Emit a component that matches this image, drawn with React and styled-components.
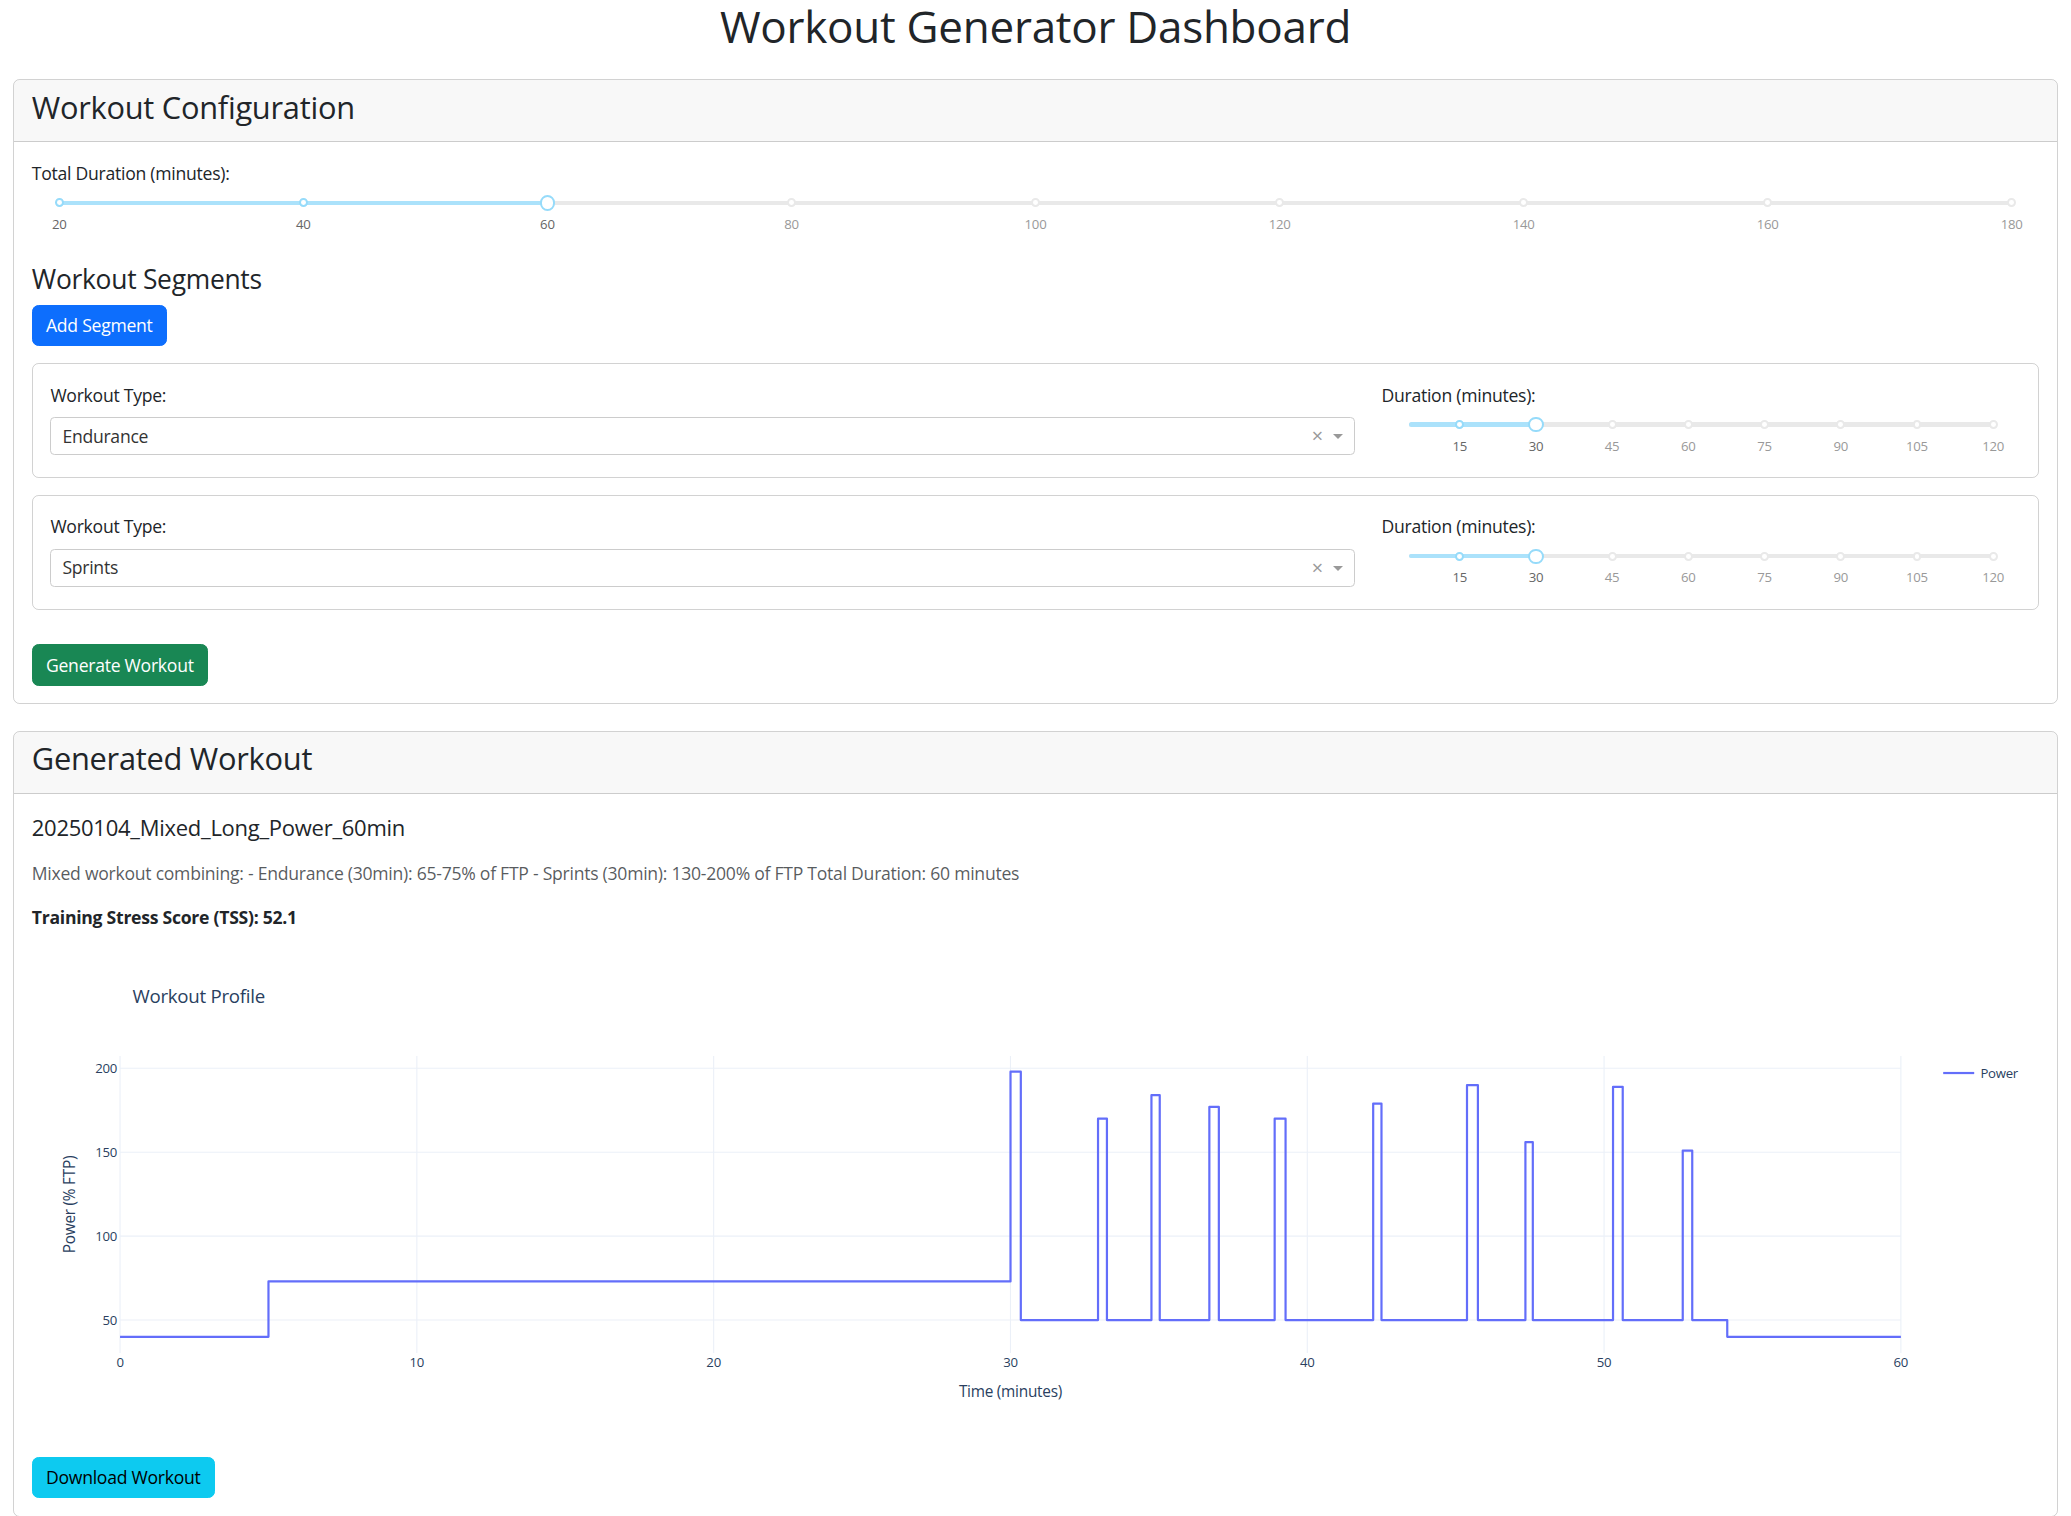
import React from "react";
import styled, { createGlobalStyle } from "styled-components";

const GlobalStyle = createGlobalStyle`
  * { box-sizing: border-box; }
  body {
    margin: 0;
    font-family: "Open Sans", "Noto Sans", "DejaVu Sans", sans-serif;
    font-size: 17.6px;
    line-height: 1.5;
    letter-spacing: -0.015em;
    color: #212529;
    background: #fff;
  }
`;

const Page = styled.div`
  padding: 0 13.2px;
`;

const PageTitle = styled.h1`
  margin: 0 0 26.4px;
  font-size: 44px;
  font-weight: 500;
  line-height: 1.2;
  text-align: center;
`;

const Card = styled.section`
  border: 1px solid rgba(0, 0, 0, 0.175);
  border-radius: 6.6px;
  margin-bottom: 26.4px;
  overflow: hidden;
`;

const CardHeader = styled.div`
  padding: 8.8px 17.6px;
  background: rgba(33, 37, 41, 0.03);
  border-bottom: 1px solid rgba(0, 0, 0, 0.175);
`;

const CardTitle = styled.h3`
  margin: 0 0 6.6px;
  font-size: 30.8px;
  font-weight: 500;
  line-height: 1.2;
`;

const CardBody = styled.div`
  padding: 17.6px;
`;

const FieldLabel = styled.label`
  display: block;
  margin-bottom: 8.8px;
`;

const SectionTitle = styled.h4`
  margin: 26.4px 0 8.8px;
  font-size: 26.4px;
  font-weight: 500;
  line-height: 1.2;
`;

const variants = {
  primary: { bg: "#0d6efd", fg: "#fff" },
  success: { bg: "#198754", fg: "#fff" },
  info: { bg: "#0dcaf0", fg: "#000" },
};

const Button = styled.button`
  display: inline-block;
  margin-top: ${(p) => p.$mt || 0}px;
  padding: 6.6px 13.2px;
  font-family: inherit;
  font-size: 17.6px;
  line-height: 1.5;
  letter-spacing: inherit;
  border: 1px solid ${(p) => variants[p.$variant].bg};
  border-radius: 6.6px;
  background: ${(p) => variants[p.$variant].bg};
  color: ${(p) => variants[p.$variant].fg};
  cursor: pointer;
`;

/* slider (rc-slider look) */
const SliderWrap = styled.div`
  padding: 0 27.5px 27.5px;
`;

const SliderBox = styled.div`
  position: relative;
  height: 15.4px;
  padding: 5.5px 0;
`;

const Rail = styled.div`
  position: absolute;
  left: 0;
  right: 0;
  top: 5.5px;
  height: 4.4px;
  background: #e9e9e9;
  border-radius: 6.6px;
`;

const Track = styled.div`
  position: absolute;
  left: 0;
  top: 5.5px;
  height: 4.4px;
  background: #abe2fb;
  border-radius: 6.6px;
`;

const Dot = styled.span`
  position: absolute;
  top: 3.3px;
  width: 8.8px;
  height: 8.8px;
  margin-left: -4.4px;
  border: 2.2px solid ${(p) => (p.$active ? "#96dbfa" : "#e9e9e9")};
  border-radius: 50%;
  background: #fff;
`;

const Handle = styled.span`
  position: absolute;
  top: 0;
  width: 15.4px;
  height: 15.4px;
  margin-left: -7.7px;
  border: 2.2px solid #96dbfa;
  border-radius: 50%;
  background: #fff;
`;

const MarkText = styled.span`
  position: absolute;
  top: 19.8px;
  transform: translateX(-50%);
  font-size: 13.2px;
  line-height: 1.5;
  color: ${(p) => (p.$active ? "#666" : "#999")};
`;

function Slider({ min, max, value, marks }) {
  const pct = (v) => ((v - min) / (max - min)) * 100;
  return (
    <SliderWrap>
      <SliderBox>
        <Rail />
        <Track style={{ width: `${pct(value)}%` }} />
        {marks.map((m) => (
          <Dot key={m} $active={m <= value} style={{ left: `${pct(m)}%` }} />
        ))}
        <Handle style={{ left: `${pct(value)}%` }} />
        {marks.map((m) => (
          <MarkText key={m} $active={m <= value} style={{ left: `${pct(m)}%` }}>
            {m}
          </MarkText>
        ))}
      </SliderBox>
    </SliderWrap>
  );
}

/* dropdown (dash react-select look) */
const Select = styled.div`
  display: flex;
  align-items: center;
  height: 38px;
  border: 1px solid #ccc;
  border-radius: 4.4px;
  background: #fff;
`;

const SelectValue = styled.div`
  flex: 1;
  padding-left: 11px;
  color: #333;
`;

const ClearZone = styled.span`
  width: 18.7px;
  text-align: center;
  font-size: 19.8px;
  line-height: 1;
  color: #999;
`;

const ArrowZone = styled.span`
  display: flex;
  justify-content: center;
  width: 27.5px;
  padding-right: 5.5px;
`;

const Arrow = styled.span`
  width: 0;
  height: 0;
  margin-top: 3px;
  border-style: solid;
  border-width: 5.5px 5.5px 2.75px;
  border-color: #999 transparent transparent;
`;

const SegmentList = styled.div`
  margin-top: 16.5px;
`;

const SegmentCard = styled.div`
  border: 1px solid rgba(0, 0, 0, 0.175);
  border-radius: 6.6px;
  margin-bottom: 16.5px;
`;

const Row = styled.div`
  display: flex;
  margin: 0 -13.2px;
`;

const Col = styled.div`
  flex: 0 0 ${(p) => (p.$span / 12) * 100}%;
  padding: 0 13.2px;
  min-width: 0;
`;

const WorkoutName = styled.h5`
  margin: 3px 0 19.7px;
  font-size: 22px;
  font-weight: 500;
  line-height: 1.2;
`;

const Description = styled.p`
  margin: 0 0 17.6px;
  color: rgba(33, 37, 41, 0.75);
`;

const Tss = styled.p`
  margin: 0 0 15.6px;
  font-weight: 700;
`;

const GraphSvg = styled.svg`
  display: block;
  width: 100%;
  height: auto;
  font-family: "Open Sans", "Noto Sans", sans-serif;
`;

const segments = [
  { type: "Endurance" },
  { type: "Sprints" },
];

const profile = [
  [0, 5, 40],
  [5, 30, 73],
  [30, 30.35, 198],
  [30.35, 32.95, 50],
  [32.95, 33.25, 170],
  [33.25, 34.75, 50],
  [34.75, 35.03, 184],
  [35.03, 36.7, 50],
  [36.7, 37.02, 177],
  [37.02, 38.9, 50],
  [38.9, 39.27, 170],
  [39.27, 42.22, 50],
  [42.22, 42.5, 179],
  [42.5, 45.38, 50],
  [45.38, 45.75, 190],
  [45.75, 47.35, 50],
  [47.35, 47.6, 156],
  [47.6, 50.3, 50],
  [50.3, 50.63, 189],
  [50.63, 52.65, 50],
  [52.65, 52.97, 151],
  [52.97, 54.15, 50],
  [54.15, 60, 40],
];

const W = 2007;
const H = 495;
const PL = 88;
const PR = 1868.5;
const PT = 110;
const PB = 407;
const sx = (t) => PL + (t * (PR - PL)) / 60;
const sy = (v) => 374 - (v - 50) * 1.678;

function WorkoutChart() {
  const pts = [];
  profile.forEach(([a, b, v]) => {
    pts.push([sx(a), sy(v)]);
    pts.push([sx(b), sy(v)]);
  });
  const d = pts.map((p, i) => `${i ? "L" : "M"}${p[0].toFixed(1)},${p[1].toFixed(1)}`).join(" ");
  const xt = [0, 10, 20, 30, 40, 50, 60];
  const yt = [50, 100, 150, 200];
  return (
    <GraphSvg viewBox={`0 0 ${W} ${H}`}>
      <text x="100.4" y="57" fontSize="18.7" fill="#2a3f5f">Workout Profile</text>
      {xt.map((t) => (
        <line key={t} x1={sx(t)} x2={sx(t)} y1={PT} y2={PB} stroke="#ebf0f8" strokeWidth="1.1" />
      ))}
      {yt.map((v) => (
        <line key={v} x1={PL} x2={PR} y1={sy(v)} y2={sy(v)} stroke="#ebf0f8" strokeWidth="1.1" />
      ))}
      <path d={d} fill="none" stroke="#636efa" strokeWidth="2.2" strokeLinejoin="round" />
      {xt.map((t) => (
        <text key={t} x={sx(t)} y="420.5" fontSize="13.2" fill="#2a3f5f" textAnchor="middle">{t}</text>
      ))}
      {yt.map((v) => (
        <text key={v} x="85" y={sy(v) + 4.6} fontSize="13.2" fill="#2a3f5f" textAnchor="end">{v}</text>
      ))}
      <text x={(PL + PR) / 2} y="450.5" fontSize="15.4" fill="#2a3f5f" textAnchor="middle">Time (minutes)</text>
      <text
        x="0"
        y="0"
        fontSize="15.4"
        fill="#2a3f5f"
        textAnchor="middle"
        transform={`translate(42.5, ${(PT + PB) / 2}) rotate(-90)`}
      >
        Power (% FTP)
      </text>
      <line x1="1910.8" x2="1941.8" y1="127" y2="127" stroke="#636efa" strokeWidth="2.2" />
      <text x="1948" y="131.6" fontSize="13.2" fill="#2a3f5f">Power</text>
    </GraphSvg>
  );
}

export default function App() {
  return (
    <>
      <GlobalStyle />
      <Page>
        <PageTitle>Workout Generator Dashboard</PageTitle>

        <Card>
          <CardHeader>
            <CardTitle>Workout Configuration</CardTitle>
          </CardHeader>
          <CardBody>
            <FieldLabel>Total Duration (minutes):</FieldLabel>
            <Slider min={20} max={180} value={60} marks={[20, 40, 60, 80, 100, 120, 140, 160, 180]} />

            <SectionTitle>Workout Segments</SectionTitle>
            <Button $variant="primary">Add Segment</Button>

            <SegmentList>
              {segments.map((s) => (
                <SegmentCard key={s.type}>
                  <CardBody>
                    <Row>
                      <Col $span={8}>
                        <FieldLabel>Workout Type:</FieldLabel>
                        <Select>
                          <SelectValue>{s.type}</SelectValue>
                          <ClearZone>×</ClearZone>
                          <ArrowZone>
                            <Arrow />
                          </ArrowZone>
                        </Select>
                      </Col>
                      <Col $span={4}>
                        <FieldLabel>Duration (minutes):</FieldLabel>
                        <Slider min={5} max={120} value={30} marks={[15, 30, 45, 60, 75, 90, 105, 120]} />
                      </Col>
                    </Row>
                  </CardBody>
                </SegmentCard>
              ))}
            </SegmentList>

            <Button $variant="success" $mt={17.6}>Generate Workout</Button>
          </CardBody>
        </Card>

        <Card>
          <CardHeader>
            <CardTitle>Generated Workout</CardTitle>
          </CardHeader>
          <CardBody>
            <WorkoutName>20250104_Mixed_Long_Power_60min</WorkoutName>
            <Description>
              Mixed workout combining: - Endurance (30min): 65-75% of FTP - Sprints (30min): 130-200% of FTP Total Duration: 60 minutes
            </Description>
            <Tss>Training Stress Score (TSS): 52.1</Tss>
            <WorkoutChart />
            <Button $variant="info" $mt={15}>Download Workout</Button>
          </CardBody>
        </Card>
      </Page>
    </>
  );
}
